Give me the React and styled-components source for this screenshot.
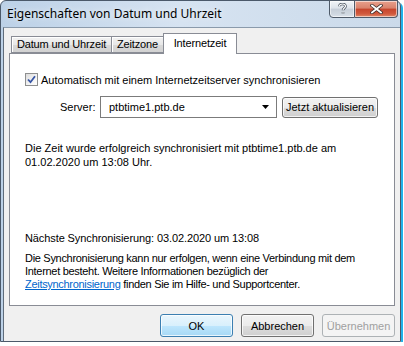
import React from "react";
import styled, { createGlobalStyle } from "styled-components";

const GlobalStyle = createGlobalStyle`
  html, body {
    margin: 0;
    padding: 0;
    background: #ffffff;
  }
  body {
    font-family: "Liberation Sans", Tahoma, sans-serif;
    font-size: 11px;
    color: #000000;
  }
`;

const Window = styled.div`
  width: 401px;
  height: 342px;
  box-sizing: border-box;
  display: flex;
  flex-direction: column;
  border: 1px solid #4b596a;
  border-radius: 6px 6px 0 0;
  padding-left: 2px;
  background: linear-gradient(to right, #bcd1e7 0%, #d6e3f1 45%, #cbdaea 100%);
  box-shadow: 2px 2px 0 #22b2ea;
`;

const TitleBar = styled.div`
  height: 26px;
  display: flex;
  align-items: flex-start;
  padding-right: 2px;
`;

const Title = styled.div`
  font-family: "Noto Sans", "Segoe UI", sans-serif;
  font-size: 12px;
  color: #000;
  padding: 4px 0 0 4px;
  flex: 1;
  text-shadow: 0 0 6px rgba(255, 255, 255, 0.9);
`;

const CaptionButton = styled.div`
  height: 18px;
  margin-top: -1px;
  box-sizing: border-box;
  border: 1px solid #4e5a69;
  display: flex;
  align-items: center;
  justify-content: center;
  width: ${p => (p.close ? "43px" : "26px")};
  border-radius: ${p => (p.close ? "0 0 4px 0" : "0 0 0 4px")};
  border-left-width: ${p => (p.close ? "0" : "1px")};
  background: ${p =>
    p.close
      ? "linear-gradient(to bottom, #e8a08c 0%, #d9826c 45%, #c6452c 50%, #d1593d 80%, #e08a6a 100%)"
      : "linear-gradient(to bottom, #f2f5f8 0%, #dde3ea 45%, #c6ced8 50%, #cfd7e0 80%, #dce3eb 100%)"};
  box-shadow: inset 0 0 0 1px rgba(255, 255, 255, 0.55);
`;

const Client = styled.div`
  flex: 1;
  display: flex;
  flex-direction: column;
  background: #f0f0f0;
  border-top: 1px solid #8a9aab;
  border-left: 1px solid #5f6c7b;
  padding: 5px 5px 4px 5px;
`;

const TabRow = styled.div`
  height: 20px;
  display: flex;
  align-items: flex-end;
  padding-left: 2px;
  position: relative;
  z-index: 1;
`;

const Tab = styled.div`
  box-sizing: border-box;
  width: ${p => p.w}px;
  margin-left: -1px;
  border: 1px solid #898c95;
  border-bottom: ${p => (p.active ? "none" : "1px solid #898c95")};
  height: ${p => (p.active ? "21px" : "17px")};
  margin-bottom: ${p => (p.active ? "-1px" : "0")};
  padding-top: ${p => (p.active ? "3px" : "1px")};
  text-align: center;
  letter-spacing: -0.15px;
  background: ${p =>
    p.active ? "#ffffff" : "linear-gradient(to bottom, #f2f2f2 0%, #e8e8e8 50%, #d9d9d9 51%, #d2d2d2 100%)"};
  box-shadow: ${p => (p.active ? "none" : "inset 1px 1px 0 #ffffff")};
  &:first-child {
    margin-left: 0;
  }
`;

const Panel = styled.div`
  flex: 1;
  background: #ffffff;
  border: 1px solid #898c95;
  display: flex;
  flex-direction: column;
  padding: 19px 15px 14px 15px;
`;

const CheckRow = styled.label`
  display: flex;
  align-items: center;
  height: 13px;
  gap: 3px;
`;

const Box = styled.span`
  width: 13px;
  height: 13px;
  box-sizing: border-box;
  border: 1px solid #8e8f8f;
  background: linear-gradient(135deg, #dcdcdc 0%, #f4f4f4 60%, #ffffff 100%);
  display: flex;
  align-items: center;
  justify-content: center;
`;

const ServerRow = styled.div`
  display: flex;
  align-items: center;
  margin-top: 10px;
  padding-left: 35px;
  height: 22px;
`;

const Label = styled.span`
  width: 40px;
`;

const Combo = styled.div`
  width: 177px;
  height: 22px;
  box-sizing: border-box;
  border: 1px solid #7b7b7b;
  background: #fff;
  display: flex;
  align-items: center;
  padding: 0 7px 0 8px;
  justify-content: space-between;
`;

const Button = styled.div`
  box-sizing: border-box;
  width: ${p => p.w || 73}px;
  height: ${p => p.h || 23}px;
  margin-left: ${p => p.ml || 0}px;
  display: flex;
  align-items: center;
  justify-content: center;
  border-radius: 3px;
  border: 1px solid ${p => (p.primary ? "#3c7fb1" : p.disabled ? "#adb2b5" : "#707070")};
  color: ${p => (p.disabled ? "#a0a0a0" : "#000")};
  background: ${p =>
    p.disabled
      ? "#f4f4f4"
      : p.primary
      ? "linear-gradient(to bottom, #eaf6fd 0%, #d9f0fc 50%, #bee6fd 51%, #a7d9f5 100%)"
      : "linear-gradient(to bottom, #f2f2f2 0%, #ebebeb 50%, #dddddd 51%, #cfcfcf 100%)"};
  box-shadow: ${p => (p.disabled ? "none" : "inset 0 0 0 1px rgba(255,255,255,0.75)")};
`;

const Text = styled.div`
  line-height: ${p => p.lh || 14}px;
  margin-top: ${p => p.mt || 0}px;
  letter-spacing: ${p => p.ls || 0}px;
`;

const Link = styled.a`
  color: #0066cc;
  text-decoration: underline;
`;

const Spacer = styled.div`
  flex: 1;
`;

const Footer = styled.div`
  display: flex;
  justify-content: flex-end;
  gap: 8px;
  margin-top: 8px;
`;

const CloseIcon = () => (
  <svg width="13" height="10" viewBox="0 0 13 10">
    <path d="M2 1.5 L11 8.5 M11 1.5 L2 8.5" stroke="#3a2a28" strokeWidth="3.4" strokeLinecap="square" fill="none" />
    <path d="M2 1.5 L11 8.5 M11 1.5 L2 8.5" stroke="#ffffff" strokeWidth="1.8" strokeLinecap="square" fill="none" />
  </svg>
);

const HelpIcon = () => (
  <svg width="9" height="12" viewBox="0 0 9 12">
    <path
      d="M1.5 3.2 C1.5 1.5 3 1 4.5 1 C6.2 1 7.5 1.8 7.5 3.3 C7.5 5 5 5.2 5 7.2 M5 9.3 L5 10.6"
      stroke="#46505c"
      strokeWidth="2.6"
      fill="none"
    />
    <path
      d="M1.5 3.2 C1.5 1.5 3 1 4.5 1 C6.2 1 7.5 1.8 7.5 3.3 C7.5 5 5 5.2 5 7.2 M5 9.3 L5 10.6"
      stroke="#ffffff"
      strokeWidth="1.2"
      fill="none"
    />
  </svg>
);

const Check = () => (
  <svg width="9" height="9" viewBox="0 0 9 9">
    <path d="M1 4.5 L3.5 7.2 L8 1.2" stroke="#3655a5" strokeWidth="1.8" fill="none" />
  </svg>
);

const Arrow = () => (
  <svg width="7" height="4" viewBox="0 0 7 4">
    <path d="M0 0 L7 0 L3.5 4 Z" fill="#000" />
  </svg>
);

export default function App() {
  return (
    <>
      <GlobalStyle />
      <Window>
        <TitleBar>
          <Title>Eigenschaften von Datum und Uhrzeit</Title>
          <CaptionButton>
            <HelpIcon />
          </CaptionButton>
          <CaptionButton close>
            <CloseIcon />
          </CaptionButton>
        </TitleBar>
        <Client>
          <TabRow>
            <Tab w={101}>Datum und Uhrzeit</Tab>
            <Tab w={53}>Zeitzone</Tab>
            <Tab w={74} active>
              Internetzeit
            </Tab>
          </TabRow>
          <Panel>
            <CheckRow>
              <Box>
                <Check />
              </Box>
              Automatisch mit einem Internetzeitserver synchronisieren
            </CheckRow>
            <ServerRow>
              <Label>Server:</Label>
              <Combo>
                <span>ptbtime1.ptb.de</span>
                <Arrow />
              </Combo>
              <Button w={96} h={21} ml={5}>
                Jetzt aktualisieren
              </Button>
            </ServerRow>
            <Text mt={23}>
              Die Zeit wurde erfolgreich synchronisiert mit ptbtime1.ptb.de am
              <br />
              01.02.2020 um 13:08 Uhr.
            </Text>
            <Spacer />
            <Text ls={-0.1}>Nächste Synchronisierung: 03.02.2020 um 13:08</Text>
            <Text lh={13} mt={7} ls={-0.3}>
              Die Synchronisierung kann nur erfolgen, wenn eine Verbindung mit dem
              <br />
              Internet besteht. Weitere Informationen bezüglich der
              <br />
              <Link>Zeitsynchronisierung</Link> finden Sie im Hilfe- und Supportcenter.
            </Text>
          </Panel>
          <Footer>
            <Button primary>OK</Button>
            <Button>Abbrechen</Button>
            <Button disabled>Übernehmen</Button>
          </Footer>
        </Client>
      </Window>
    </>
  );
}
